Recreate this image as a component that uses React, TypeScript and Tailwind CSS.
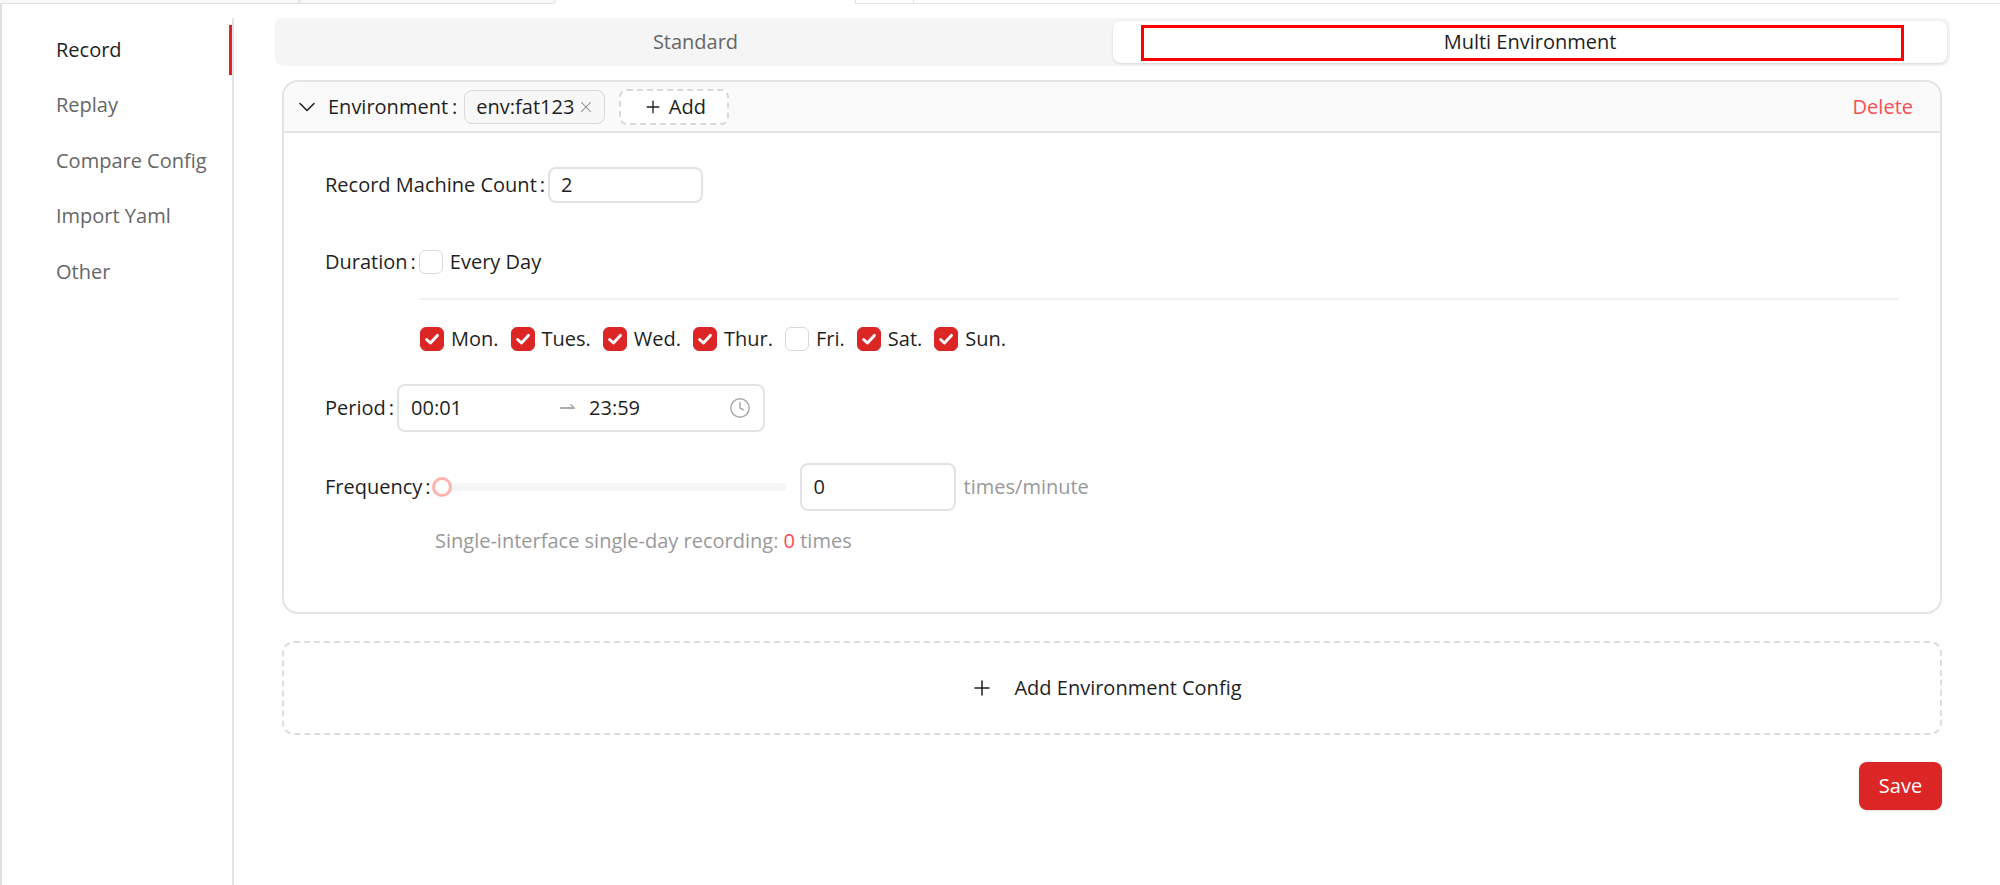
import { ChevronDown, Clock, Plus, X } from 'lucide-react'

const menu = ['Record', 'Replay', 'Compare Config', 'Import Yaml', 'Other']
const days = [
  { label: 'Mon.', on: true },
  { label: 'Tues.', on: true },
  { label: 'Wed.', on: true },
  { label: 'Thur.', on: true },
  { label: 'Fri.', on: false },
  { label: 'Sat.', on: true },
  { label: 'Sun.', on: true },
]

function Box({ on }: { on: boolean }) {
  return (
    <span
      className={`flex h-6 w-6 shrink-0 items-center justify-center rounded-md border ${
        on ? 'border-[#dc2626] bg-[#dc2626]' : 'border-[#d9d9d9] bg-white'
      }`}
    >
      {on && (
        <svg viewBox="0 0 16 16" className="h-[18px] w-[18px]" fill="none">
          <path d="M3.2 8.4 6.6 11.6 12.8 4.8" stroke="#fff" strokeWidth="2.6" strokeLinecap="round" strokeLinejoin="round" />
        </svg>
      )}
    </span>
  )
}

export default function App() {
  return (
    <div className="relative h-[885px] w-[2000px] overflow-hidden bg-white font-['Open_Sans',sans-serif] text-[20px] text-[#1f1f1f]">
      {/* browser-tab remnants along the very top */}
      <div className="flex h-[4px]">
        <div className="flex w-[556px] rounded-br-sm border-b border-r border-[#e3e3e3] bg-[#f7f7f7]">
          <div className="w-[300px] border-r-2 border-[#e3e3e3]" />
        </div>
        <div className="ml-[299px] flex flex-1 border-b border-l border-[#e3e3e3] bg-white">
          <div className="w-[58px] border-r border-[#e3e3e3]" />
        </div>
      </div>
      <div className="flex h-[881px] border-l-2 border-[#e0e0e0]">
        <aside className="mt-[14px] w-[232px] shrink-0 border-r-2 border-[#e3e3e3] pt-[7px]">
          <ul className="flex flex-col gap-[6px]">
            {menu.map((item, i) => (
              <li
                key={item}
                className={`flex h-[49.5px] items-center pl-[54px] ${
                  i === 0 ? 'border-r-[3px] border-[#dc2626] text-[#1f1f1f]' : 'text-[#666666]'
                }`}
              >
                {item}
              </li>
            ))}
          </ul>
        </aside>

        <main className="w-[1766px] pl-[41px] pr-[50px] pt-[14px]">
          <div className="flex h-[48px] rounded-lg bg-[#f5f5f5] p-[3px]">
            <div className="flex flex-1 items-center justify-center text-[#666666]">Standard</div>
            <div className="relative flex w-[834px] items-center justify-center rounded-lg bg-white shadow-sm">
              Multi Environment
              <div className="absolute left-[28px] top-[4px] h-[36px] w-[763px] border-[3px] border-[#ff0000]" />
            </div>
          </div>

          <section className="ml-[7px] mt-[14px] h-[534px] w-[1660px] rounded-2xl border-2 border-[#e3e3e3]">
            <header className="flex h-[51px] items-center rounded-t-2xl border-b-2 border-[#e3e3e3] bg-[#fafafa] pl-[9px] pr-[27px] pt-[1px]">
              <ChevronDown className="h-[28px] w-[28px]" strokeWidth={1.3} />
              <span className="ml-[7px]">Environment</span>
              <span className="ml-[4px]">:</span>
              <span className="ml-[7px] flex h-[34px] items-center gap-[3px] rounded-lg border border-[#d9d9d9] bg-[#f7f7f7] pl-[11px] pr-[9px]">
                env:fat123
                <X className="h-[18px] w-[18px] text-[#888888]" strokeWidth={1.4} />
              </span>
              <span className="ml-[14px] flex h-[36px] w-[110px] items-center justify-center gap-[6px] rounded-lg border-2 border-dashed border-[#d9d9d9] bg-white">
                <Plus className="h-[20px] w-[20px]" strokeWidth={1.6} />
                Add
              </span>
              <span className="ml-auto text-[#ff4d4f]">Delete</span>
            </header>

            <div className="pl-[41px] pr-[42px] pt-[34px]">
              <div className="flex h-[36px] items-center">
                <span>Record Machine Count</span>
                <span className="ml-[3px]">:</span>
                <div className="ml-[3px] flex h-[36px] w-[155px] items-center rounded-lg border-2 border-[#e3e3e3] pl-[11px]">2</div>
              </div>

              <div className="mt-[41px] flex h-[36px] items-center">
                <span>Duration</span>
                <span className="ml-[3px]">:</span>
                <span className="ml-[3px] flex items-center gap-[7px]">
                  <Box on={false} />
                  Every Day
                </span>
              </div>

              <div className="ml-[95px] mt-[18px] border-t-2 border-[#f0f0f0]" />

              <div className="ml-[95px] mt-[21px] flex h-[36px] items-center gap-[12px]">
                {days.map((d) => (
                  <span key={d.label} className="flex items-center gap-[7px]">
                    <Box on={d.on} />
                    {d.label}
                  </span>
                ))}
              </div>

              <div className="mt-[27px] flex h-[48px] items-center">
                <span>Period</span>
                <span className="ml-[3px]">:</span>
                <div className="ml-[3px] flex h-[48px] w-[368px] items-center rounded-lg border-2 border-[#e3e3e3] pl-[12px] pr-[12px]">
                  <span className="w-[148px]">00:01</span>
                  <span className="mb-[3px] w-[30px] text-[#aaaaaa]">⇀</span>
                  <span>23:59</span>
                  <Clock className="ml-auto h-[22px] w-[22px] text-[#aaaaaa]" strokeWidth={1.6} />
                </div>
              </div>

              <div className="mt-[31px] flex h-[48px] items-center">
                <span>Frequency</span>
                <span className="ml-[3px]">:</span>
                <div className="relative h-[8px] w-[355px] rounded bg-[#f5f5f5]">
                  <span className="absolute -top-[6px] left-[1px] h-[20px] w-[20px] rounded-full border-[3px] border-[#ffb3ae] bg-white" />
                </div>
                <div className="ml-[14px] flex h-[48px] w-[156px] items-center rounded-lg border-2 border-[#e3e3e3] pl-[12px]">0</div>
                <span className="ml-[8px] text-[#999999]">times/minute</span>
              </div>

              <p className="ml-[110px] mt-[15px] text-[#999999]">
                Single-interface single-day recording: <span className="text-[#ff4d4f]">0</span> times
              </p>
            </div>
          </section>

          <div className="ml-[7px] mt-[27px] flex h-[94px] w-[1660px] items-center justify-center gap-[20px] rounded-xl border-2 border-dashed border-[#dddddd] pr-[12px]">
            <Plus className="h-[24px] w-[24px]" strokeWidth={1.5} />
            <span>Add Environment Config</span>
          </div>

          <div className="mt-[27px] flex w-[1667px] justify-end">
            <button className="h-[48px] w-[83px] rounded-lg bg-[#dc2626] text-white shadow-sm">Save</button>
          </div>
        </main>
      </div>
    </div>
  )
}
